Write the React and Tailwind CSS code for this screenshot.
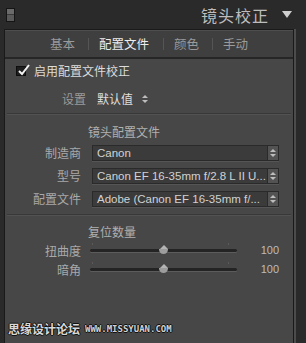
import React from 'react';

const CJK = '"Noto Sans CJK SC", "Noto Sans", sans-serif';
const LAT = '"Liberation Sans", "Noto Sans CJK SC", sans-serif';

function Spinner() {
  return (
    <span className="flex flex-col items-center gap-[2px]">
      <span className="w-0 h-0 border-x-[3px] border-x-transparent border-b-[3px] border-b-[#bdbdbd]" />
      <span className="w-0 h-0 border-x-[3px] border-x-transparent border-t-[3px] border-t-[#bdbdbd]" />
    </span>
  );
}

function SelectRow({ label, value }) {
  return (
    <div className="flex items-center h-[23px]">
      <span className="w-[76px] text-right text-[12px] text-[#a9a9a9]" style={{ fontFamily: CJK }}>{label}</span>
      <div className="ml-[11px] w-[187px] h-[16px] flex border border-[#2a2a2a] bg-[#3b3b3b] shadow-[0_1px_0_#555]">
        <span className="flex-1 min-w-0 pl-[4px] text-[11.5px] leading-[14px] text-[#d2d2d2] whitespace-nowrap overflow-hidden" style={{ fontFamily: LAT }}>{value}</span>
        <span className="w-[11px] shrink-0 flex items-center justify-center bg-[#535353] border-l border-[#2a2a2a]">
          <Spinner />
        </span>
      </div>
    </div>
  );
}

function SliderRow({ label, value }) {
  return (
    <div className="flex items-center h-[19px]">
      <span className="w-[76px] text-right text-[12px] text-[#a9a9a9]" style={{ fontFamily: CJK }}>{label}</span>
      <div className="ml-[9px] w-[147px] relative h-[10px] flex items-center">
        <div className="w-full h-[3px] rounded-full bg-[#242424] shadow-[0_1px_0_#5c5c5c]" />
        <span className="absolute left-[2px] top-[-3px] w-px h-[2px] bg-[#5a5a5a]" />
        <span className="absolute right-[8px] top-[-3px] w-px h-[2px] bg-[#5a5a5a]" />
        <div className="absolute left-[69px] top-[-1px] flex flex-col items-center">
          <span className="w-0 h-0 border-x-[4px] border-x-transparent border-b-[4px] border-b-[#b5b5b5]" />
          <span className="w-[9px] h-[5px] rounded-b-full bg-[#9d9d9d]" />
        </div>
      </div>
      <span className="ml-auto mr-[14px] text-[11px] text-[#bcbcbc]" style={{ fontFamily: LAT }}>{value}</span>
    </div>
  );
}

export default function App() {
  return (
    <div className="w-[306px] h-[343px] bg-[#2a2a2a] overflow-hidden flex flex-col" style={{ fontFamily: CJK }}>
      {/* Header */}
      <div className="h-[29px] flex items-center shrink-0">
        <div className="ml-[6px] w-[9px] h-[14px] border border-[#151515] bg-[#5a5a5a] flex flex-col">
          <span className="h-1/2 bg-[#6a6a6a] border-b border-[#3a3a3a]" />
        </div>
        <span className="ml-auto text-[16px] tracking-[1px] text-[#bdbdbd]">镜头校正</span>
        <span className="ml-[13px] mr-[14px] w-0 h-0 border-x-[5px] border-x-transparent border-t-[7px] border-t-[#cfcfcf]" />
      </div>

      <div className="flex flex-1 min-h-0">
        <div className="w-[4px] shrink-0" />
        <div className="w-[290px] shrink-0 flex flex-col border-x border-t border-[#1a1a1a] bg-[#474747]">
          {/* Tabs */}
          <div className="h-[29px] shrink-0 flex items-center pl-[45px] bg-[#3f3f3f] border-t border-[#4e4e4e] border-b-2 border-b-[#262626] text-[12.5px]">
            <span className="text-[#9a9a9a]">基本</span>
            <span className="ml-[13px] w-px h-[12px] bg-[#555]" />
            <span className="ml-[10px] text-[#ececec]">配置文件</span>
            <span className="ml-[14px] w-px h-[12px] bg-[#555]" />
            <span className="ml-[10px] text-[#9a9a9a]">颜色</span>
            <span className="ml-[13px] w-px h-[12px] bg-[#555]" />
            <span className="ml-[10px] text-[#9a9a9a]">手动</span>
          </div>

          {/* Enable */}
          <div className="flex items-center h-[24px] pl-[11px]">
            <span className="relative w-[10px] h-[10px] bg-[#1e1e1e] border border-[#0e0e0e]">
              <svg className="absolute left-[0px] top-[-4px]" width="14" height="14" viewBox="0 0 14 14">
                <path d="M2 8 L5 11 L12 2" stroke="#f2f2f2" strokeWidth="2" fill="none" />
              </svg>
            </span>
            <span className="ml-[8px] text-[12px] text-[#dcdcdc]">启用配置文件校正</span>
          </div>
          <div className="flex items-center h-[24px] mt-[4px] pl-[57px]">
            <span className="text-[12px] text-[#9a9a9a]">设置</span>
            <span className="ml-[11px] text-[12px] text-[#dedede]">默认值</span>
            <span className="ml-[9px]"><Spinner /></span>
          </div>

          <div className="mx-[2px] mt-[2px] h-[2px] border-t border-[#383838] border-b border-b-[#525252]" />

          <div className="h-[18px] flex items-center pl-[83px] mt-[8px] text-[12px] text-[#b0b0b0]">镜头配置文件</div>
          <SelectRow label="制造商" value="Canon" />
          <SelectRow label="型号" value="Canon EF 16-35mm f/2.8 L II U..." />
          <SelectRow label="配置文件" value="Adobe (Canon EF 16-35mm f/..." />

          <div className="mx-[2px] mt-[4px] h-[2px] border-t border-[#383838] border-b border-b-[#525252]" />

          <div className="h-[18px] flex items-center pl-[83px] mt-[7px] text-[12px] text-[#b0b0b0]">复位数量</div>
          <SliderRow label="扭曲度" value="100" />
          <SliderRow label="暗角" value="100" />

          <div className="mt-auto mb-[8px] pl-[3px] flex items-end gap-[5px]">
            <span className="text-[12px] leading-[13px] font-bold text-[#d8d8d8]" style={{ textShadow: '1px 0 #111, -1px 0 #111, 0 1px #111, 0 -1px #111' }}>思缘设计论坛</span>
            <span className="text-[9px] leading-[11px] font-bold text-[#d0d0d0]" style={{ fontFamily: '"DejaVu Sans Mono", monospace', textShadow: '1px 0 #111, -1px 0 #111, 0 1px #111, 0 -1px #111' }}>WWW.MISSYUAN.COM</span>
          </div>
        </div>
        <div className="w-[2px] shrink-0 bg-[#4c4c4c]" />
        <div className="flex-1" />
      </div>
    </div>
  );
}
